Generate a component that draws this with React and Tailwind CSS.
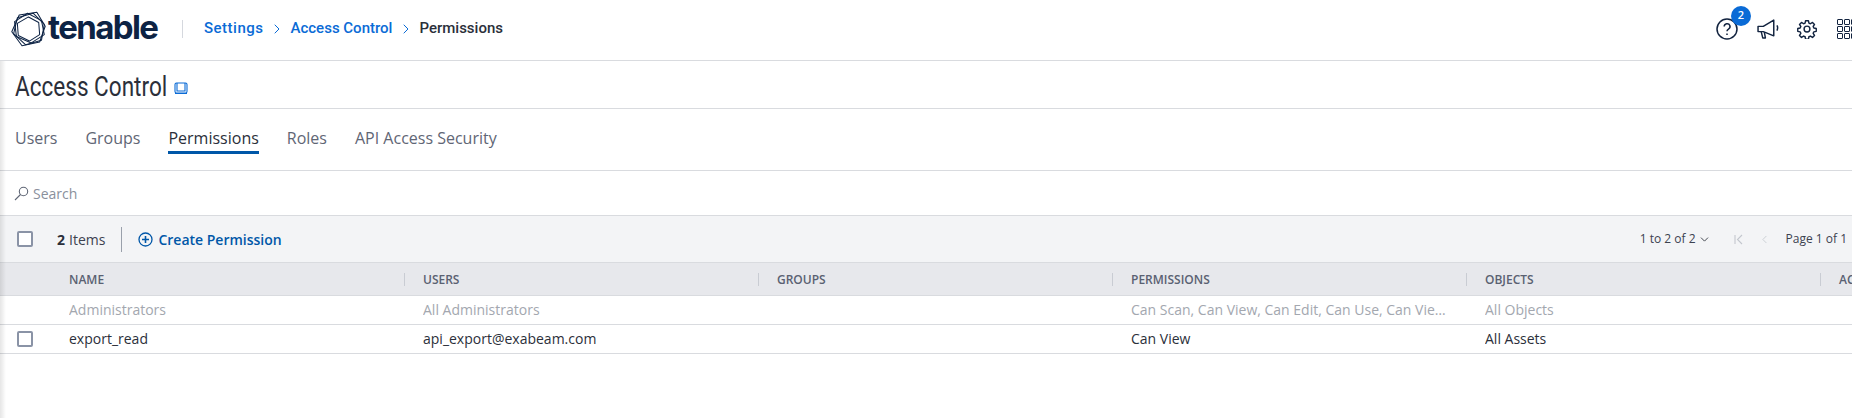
import { ChevronRight, ChevronDown, ChevronLeft } from 'lucide-react'

const cols = ['NAME', 'USERS', 'GROUPS', 'PERMISSIONS', 'OBJECTS', 'ACTIONS']

const rows = [
  { cells: ['Administrators', 'All Administrators', '', 'Can Scan, Can View, Can Edit, Can Use, Can View Logs, Can Delete', 'All Objects'], muted: true },
  { cells: ['export_read', 'api_export@exabeam.com', '', 'Can View', 'All Assets'], muted: false },
]

function Logo() {
  return (
    <svg width="40" height="40" viewBox="0 0 42 42" fill="none" stroke="#0d2344" strokeWidth="1.1" strokeLinejoin="round">
      <path d="M11 6l19-3 9 15-6 17-19 4L3 24z" />
      <path d="M9 9l17-5 12 12-3 17-17 5L5 26z" />
      <path d="M6 13l14-9 15 8 3 15-14 9L8 29z" />
      <path d="M21 8l11 6 1 13-11 7-12-6-1-13z" />
    </svg>
  )
}

function Checkbox() {
  return <span className="block w-4 h-4 bg-white border-2 border-[#8a93a6] rounded-[2px]" />
}

function App() {
  return (
    <div className="relative w-[1852px] h-[418px] overflow-hidden bg-white font-['Open_Sans',sans-serif] text-[#2b2f3a]">
      <header className="h-[61px] border-b border-[#d9dbdf] flex items-center pl-[10px]">
        <div className="w-[39px] flex items-center -mt-[3px] -ml-[1px]"><Logo /></div>
        <span className="font-['Inter',sans-serif] font-bold text-[33px] leading-none tracking-[-1.6px] text-[#0d2344] -mt-[5px] w-[110px]">tenable</span>
        <div className="w-px h-[18px] bg-[#d5d8de] ml-[24px] -mt-[3px]" />
        <nav className="flex items-center font-['Roboto',sans-serif] text-[15px] font-medium ml-[21px] -mt-[3px]">
          <span className="text-[#0a6bd6] tracking-[0.5px]">Settings</span>
          <ChevronRight className="w-4 h-4 mx-[5.5px] text-[#0a6bd6]" strokeWidth={1.5} />
          <span className="text-[#0a6bd6]">Access Control</span>
          <ChevronRight className="w-4 h-4 mx-[5.5px] text-[#0a6bd6]" strokeWidth={1.5} />
          <span className="text-[#2b2f3a]">Permissions</span>
        </nav>
        <div className="flex-1" />
        <div className="flex items-center -mt-[3px] text-[#12233f] w-[136px] shrink-0">
          <div className="relative w-[22px] h-[22px] shrink-0">
            <svg width="22" height="22" viewBox="0 0 22 22" fill="none" stroke="currentColor" strokeWidth="1.5">
              <circle cx="11" cy="11" r="10" />
              <path d="M8.2 8.6a2.9 2.9 0 1 1 4.3 2.5c-1 .6-1.5 1.1-1.5 2.1" />
              <path d="M11 15.4v1.5" />
            </svg>
            <span className="absolute -top-[12px] left-[15px] w-[20px] h-[20px] rounded-full bg-[#0a6bd6] text-white text-[11px] font-semibold flex items-center justify-center">2</span>
          </div>
          <svg width="22" height="20" viewBox="1 1 21 19" fill="none" stroke="currentColor" strokeWidth="1.4" strokeLinejoin="round" className="shrink-0 ml-[19px]">
            <path d="M2 8h5l10-6v15L7 13H2z" />
            <path d="M5 13l1.5 6H9l-1-5.5" />
            <path d="M20 7c1 1.5 1 3 0 5" />
          </svg>
          <svg width="20" height="20" viewBox="0 0 24 24" fill="none" stroke="currentColor" strokeWidth="1.7" strokeLinejoin="round" className="shrink-0 ml-[18px]">
            <circle cx="12" cy="12" r="3.5" />
            <path d="M10.3 2h3.4l.6 2.9 1.8.8 2.5-1.6 2.4 2.4-1.6 2.5.8 1.8 2.9.6v3.4l-2.9.6-.8 1.8 1.6 2.5-2.4 2.4-2.5-1.6-1.8.8-.6 2.9h-3.4l-.6-2.9-1.8-.8-2.5 1.6-2.4-2.4 1.6-2.5-.8-1.8-2.9-.6v-3.4l2.9-.6.8-1.8-1.6-2.5 2.4-2.4 2.5 1.6 1.8-.8z" />
          </svg>
          <div className="grid grid-cols-[6px_6px_6px] gap-[1px] shrink-0 ml-[20px]">
            {Array.from({ length: 9 }).map((_, i) => (
              <span key={i} className="w-[6px] h-[6px] border-[1.5px] border-[#12233f] rounded-[1px]" />
            ))}
          </div>
        </div>
      </header>

      <div className="h-[48px] border-b border-[#d9dbdf] flex items-center pl-[15px]">
        <div className="w-[153px] mt-[5px]">
          <h1 className="font-['Roboto',sans-serif] text-[28px] leading-none text-[#2b2f3a] whitespace-nowrap origin-left scale-x-[0.805]">Access Control</h1>
        </div>
        <svg width="14" height="14" viewBox="0 0 14 14" fill="none" stroke="#0a6bd6" strokeWidth="1.1" className="ml-[6px] mt-[6px]">
          <rect x="1" y="2" width="12" height="10" rx="1.5" />
          <path d="M3 2v8h8V2M1 12.5h12" />
        </svg>
      </div>

      <div className="h-[62px] border-b border-[#d9dbdf] flex items-center pl-[15px] pb-[4px] gap-[28px] text-[16px] text-[#5f6675]">
        <span>Users</span>
        <span>Groups</span>
        <span className="relative text-[#2b2f3a]">
          Permissions
          <span className="absolute left-0 right-0 -bottom-[4px] h-[3px] bg-[#0057a8]" />
        </span>
        <span>Roles</span>
        <span>API Access Security</span>
      </div>

      <div className="h-[45px] border-b border-[#d9dbdf] flex items-center pl-[14px] text-[14px] text-[#8a909c] gap-[4px]">
        <svg width="15" height="15" viewBox="0 0 15 15" fill="none" stroke="#5f6675" strokeWidth="1.1">
          <circle cx="9.5" cy="5.5" r="4.2" />
          <path d="M6.5 8.5L1 14" />
        </svg>
        <span>Search</span>
      </div>

      <div className="h-[47px] border-b border-[#d9dbdf] bg-[#f3f4f6] flex items-center text-[14px]">
        <div className="pl-[17px] w-[57px]"><Checkbox /></div>
        <span className="font-bold">2</span>
        <span className="ml-[4px] text-[#3c4250]">Items</span>
        <div className="w-px h-[25px] bg-[#9aa0ab] ml-[16px]" />
        <svg width="15" height="15" viewBox="0 0 15 15" fill="none" stroke="#0057a8" strokeWidth="1.3" className="ml-[16px]">
          <circle cx="7.5" cy="7.5" r="6.5" />
          <path d="M7.5 4v7M4 7.5h7" strokeWidth="1.6" />
        </svg>
        <span className="ml-[5px] text-[#0057a8] font-semibold">Create Permission</span>
        <div className="flex-1" />
        <span className="text-[12px] text-[#3c4250]">1 to 2 of 2</span>
        <ChevronDown className="w-[13px] h-[13px] ml-[2px] text-[#2b2f3a]" strokeWidth={1.6} />
        <svg width="9" height="11" viewBox="0 0 9 11" fill="none" stroke="#c3c7ce" strokeWidth="1.1" className="ml-[23px]">
          <path d="M1 1v9M8 1L3.5 5.5 8 10" />
        </svg>
        <ChevronLeft className="w-[13px] h-[13px] ml-[15px] text-[#c3c7ce]" strokeWidth={1.5} />
        <span className="ml-[15px] text-[12px] text-[#3c4250] whitespace-nowrap pr-[5px]">Page 1 of 1</span>
      </div>

      <div className="grid grid-cols-[69px_354px_354px_354px_354px_354px_1fr] h-[33px] pt-[1px] bg-[#e7e8ec] border-b border-[#d9dbdf] items-center text-[12px] font-semibold text-[#5a6172] overflow-hidden">
        <span />
        {cols.map((c, i) => (
          <div key={c} className="relative h-full flex items-center">
            <span>{c}</span>
            {i < 5 && <span className="absolute right-[18px] top-[9px] w-px h-[13px] bg-[#c9ccd3]" />}
          </div>
        ))}
      </div>

      {rows.map((r) => (
        <div key={r.cells[0]} className={`grid grid-cols-[69px_354px_354px_354px_354px_1fr] h-[29px] pb-[1px] border-b border-[#d9dbdf] items-center text-[14px] ${r.muted ? 'text-[#a3a7af]' : 'text-[#2b2f3a]'}`}>
          <div className="pl-[17px]">{!r.muted && <Checkbox />}</div>
          {r.cells.map((c, i) => (
            <span key={i} className="truncate pr-[35px]">{c}</span>
          ))}
        </div>
      ))}

      {/* soft shadow from the collapsed side nav */}
      <div className="absolute left-0 top-[61px] bottom-0 w-[6px] bg-gradient-to-r from-black/10 to-transparent pointer-events-none" />
    </div>
  )
}

export default App
